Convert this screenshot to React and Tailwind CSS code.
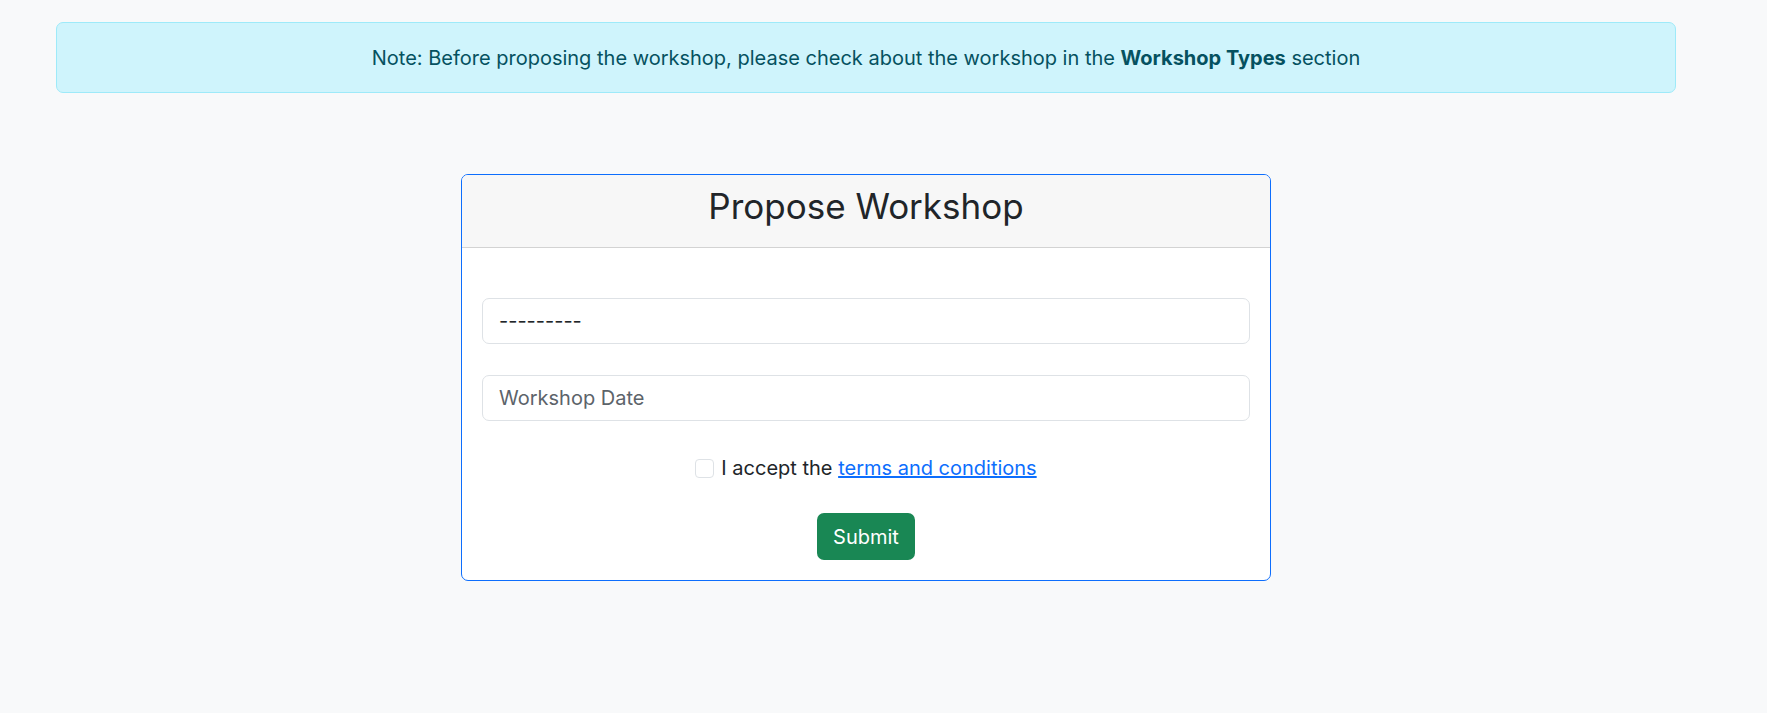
import React from 'react';

export default function App() {
  return (
    <div
      className="min-h-[713px] bg-[#f8f9fa] pt-[22px] text-[#212529]"
      style={{ fontFamily: 'Inter, "Noto Sans", sans-serif' }}
    >
      <div className="ml-[56px] w-[1620px] h-[71px] flex items-center justify-center rounded-[7px] border border-[#9eeaf9] bg-[#cff4fc] text-[20px] text-[#055160]">
        <p>
          Note: Before proposing the workshop, please check about the workshop in the{' '}
          <b className="font-bold">Workshop Types</b> section
        </p>
      </div>

      <div className="ml-[461px] mt-[81px] w-[810px] rounded-[7px] border border-[#0d6efd] bg-white overflow-hidden">
        <div className="h-[73px] flex justify-center pt-[10px] bg-[#f7f7f7] border-b border-[#d3d3d3]">
          <h2 className="text-[35px] leading-[1.2] font-normal">Propose Workshop</h2>
        </div>

        <form className="px-[20px] pt-[50px] pb-[20px] flex flex-col" onSubmit={(e) => e.preventDefault()}>
          <select className="h-[46px] w-full rounded-[7px] border border-[#dee2e6] bg-white px-[16px] text-[20px] text-[#212529] appearance-none outline-none">
            <option>---------</option>
          </select>

          <input
            type="text"
            placeholder="Workshop Date"
            className="mt-[31px] h-[46px] w-full rounded-[7px] border border-[#dee2e6] bg-white px-[16px] text-[20px] placeholder:text-[#5c636a] outline-none"
          />

          <label className="mt-[32px] flex items-center justify-center gap-[7px] text-[20px] leading-[30px]">
            <span className="w-[19px] h-[19px] rounded-[4px] border border-[#dee2e6] bg-white" />
            <span>
              I accept the{' '}
              <a href="#" className="text-[#0d6efd] underline">
                terms and conditions
              </a>
            </span>
          </label>

          <div className="mt-[30px] flex justify-center">
            <button
              type="submit"
              className="h-[47px] w-[98px] rounded-[7px] bg-[#198754] text-white text-[20px]"
            >
              Submit
            </button>
          </div>
        </form>
      </div>
    </div>
  );
}
